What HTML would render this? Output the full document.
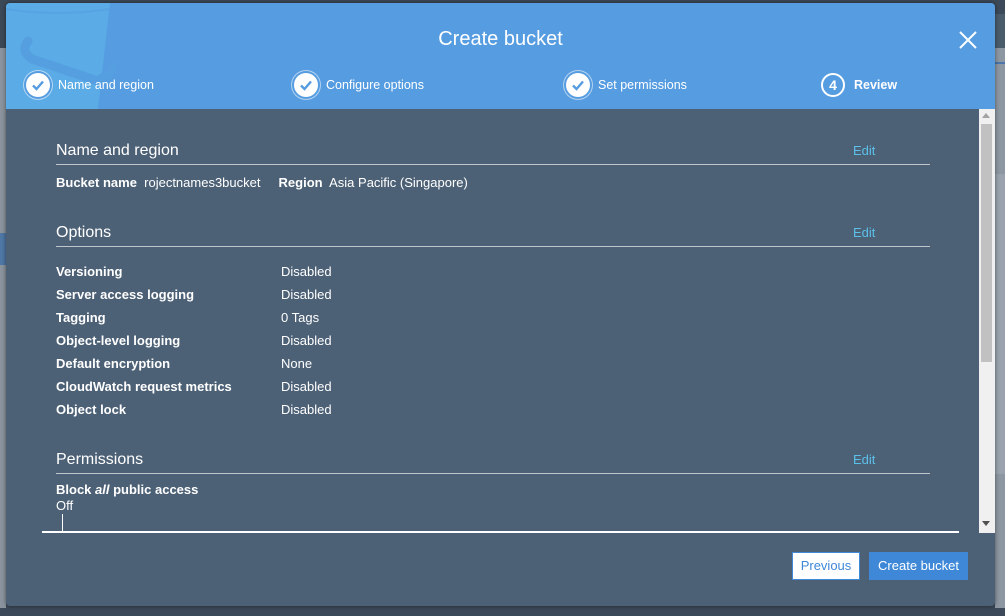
<!DOCTYPE html>
<html><head><meta charset="utf-8"><style>
*{margin:0;padding:0;box-sizing:border-box}
body{width:1005px;height:616px;overflow:hidden;background:#3c4958;font-family:"Liberation Sans",sans-serif;position:relative}
.abs{position:absolute}
.modal{position:absolute;left:6px;top:3px;width:989px;height:603px;background:#4d6176;border-radius:4px;overflow:hidden;box-shadow:0 0 4px rgba(0,0,0,.5)}
.hdr{position:absolute;left:0;top:0;width:989px;height:106px;background:#569ce0}
.title{position:absolute;left:0;width:989px;top:25px;text-align:center;color:#fff;font-size:20px}
.step{position:absolute;top:70px;color:#fff;font-size:12.5px;display:flex;align-items:center}
.ck{width:24px;height:24px;border-radius:50%;background:#fff;box-shadow:0 0 0 2px #569ce0,0 0 0 3px rgba(255,255,255,.55);margin-right:8px;display:flex;align-items:center;justify-content:center}
.num{width:24px;height:24px;border-radius:50%;border:2px solid #fff;margin-right:9px;text-align:center;font-weight:bold;font-size:14px;line-height:20px}
.h{position:absolute;left:50px;color:#fff;font-size:16px}
.line{position:absolute;left:50px;width:874px;height:1px;background:#c0c5cb}
.edit{position:absolute;left:847px;color:#5bc0ea;font-size:13px}
.t{position:absolute;color:#fff;font-size:13px}
.b{font-weight:bold}
</style></head><body>
<div class="abs" style="left:0;top:48px;width:6px;height:560px;background:#8b949e"></div>
<div class="abs" style="left:0;top:233px;width:6px;height:32px;background:#4f78a6"></div>
<div class="abs" style="left:995px;top:14px;width:10px;height:34px;background:#4a5b6c"></div>
<div class="abs" style="left:995px;top:48px;width:10px;height:560px;background:#8d97a2"></div>
<div class="abs" style="left:995px;top:62px;width:10px;height:2px;background:#4a76ab"></div>
<div class="abs" style="left:995px;top:174px;width:10px;height:300px;background:#9aa3ad"></div>
<div class="modal">
 <div class="hdr">
  <svg class="abs" style="left:0;top:0" width="120" height="106"><path d="M0 0 L104 0 L92 106 L0 106 Z" fill="#5aabe6"/><path d="M0 6 Q50 14 104 6" stroke="#569ce0" stroke-width="2" fill="none" opacity=".5"/><path d="M22 38 Q14 48 26 56 L92 78 Q104 70 108 62" stroke="#559fe1" stroke-width="9" fill="none" stroke-linecap="round"/></svg>
  <div class="title">Create bucket</div>
  <svg class="abs" style="left:952px;top:27px" width="20" height="20"><path d="M2 2L18 18M18 2L2 18" stroke="#fff" stroke-width="2"/></svg>
  <div class="step" style="left:20px"><div class="ck"><svg width="14" height="14"><path d="M2 7.5L5.5 11L12 3.5" stroke="#569ce0" stroke-width="2.4" fill="none"/></svg></div>Name and region</div>
  <div class="step" style="left:288px"><div class="ck"><svg width="14" height="14"><path d="M2 7.5L5.5 11L12 3.5" stroke="#569ce0" stroke-width="2.4" fill="none"/></svg></div>Configure options</div>
  <div class="step" style="left:560px"><div class="ck"><svg width="14" height="14"><path d="M2 7.5L5.5 11L12 3.5" stroke="#569ce0" stroke-width="2.4" fill="none"/></svg></div>Set permissions</div>
  <div class="step" style="left:815px"><div class="num">4</div><b>Review</b></div>
 </div>
 <div class="abs" style="left:973px;top:106px;width:16px;height:424px;background:#f0f0f0"></div>
 <div class="abs" style="left:975px;top:121px;width:11px;height:238px;background:#c1c1c1"></div>
 <div class="abs" style="left:976px;top:110px;width:0;height:0;border-left:4px solid transparent;border-right:4px solid transparent;border-bottom:5px solid #a3a3a3"></div>
 <div class="abs" style="left:976px;top:518px;width:0;height:0;border-left:4px solid transparent;border-right:4px solid transparent;border-top:5px solid #505050"></div>

 <div class="h" style="top:139px">Name and region</div><div class="edit" style="top:140px">Edit</div><div class="line" style="top:161px"></div>
 <div class="t" style="left:50px;top:172px"><b>Bucket name</b>&nbsp; rojectnames3bucket &nbsp;&nbsp;&nbsp; <b>Region</b>&nbsp; Asia Pacific (Singapore)</div>

 <div class="h" style="top:221px">Options</div><div class="edit" style="top:222px">Edit</div><div class="line" style="top:243px"></div>
 <div class="t b" style="left:50px;top:261px">Versioning</div><div class="t" style="left:275px;top:261px">Disabled</div>
 <div class="t b" style="left:50px;top:284px">Server access logging</div><div class="t" style="left:275px;top:284px">Disabled</div>
 <div class="t b" style="left:50px;top:307px">Tagging</div><div class="t" style="left:275px;top:307px">0 Tags</div>
 <div class="t b" style="left:50px;top:330px">Object-level logging</div><div class="t" style="left:275px;top:330px">Disabled</div>
 <div class="t b" style="left:50px;top:353px">Default encryption</div><div class="t" style="left:275px;top:353px">None</div>
 <div class="t b" style="left:50px;top:376px">CloudWatch request metrics</div><div class="t" style="left:275px;top:376px">Disabled</div>
 <div class="t b" style="left:50px;top:399px">Object lock</div><div class="t" style="left:275px;top:399px">Disabled</div>

 <div class="h" style="top:448px">Permissions</div><div class="edit" style="top:449px">Edit</div><div class="line" style="top:470px"></div>
 <div class="t b" style="left:50px;top:479px">Block <i>all</i> public access</div>
 <div class="t" style="left:50px;top:495px">Off</div>
 <div class="abs" style="left:56px;top:511px;width:1px;height:18px;background:#fff"></div>
 <div class="abs" style="left:36px;top:528px;width:917px;height:2px;background:#fff"></div>

 <div class="abs" style="left:786px;top:549px;width:68px;height:28px;background:#fff;border:1px solid #3f88d8;color:#3f88d8;font-size:13px;text-align:center;line-height:26px">Previous</div>
 <div class="abs" style="left:863px;top:549px;width:99px;height:28px;background:#3f88d8;color:#fff;font-size:13px;text-align:center;line-height:28px">Create bucket</div>
</div>
</body></html>
